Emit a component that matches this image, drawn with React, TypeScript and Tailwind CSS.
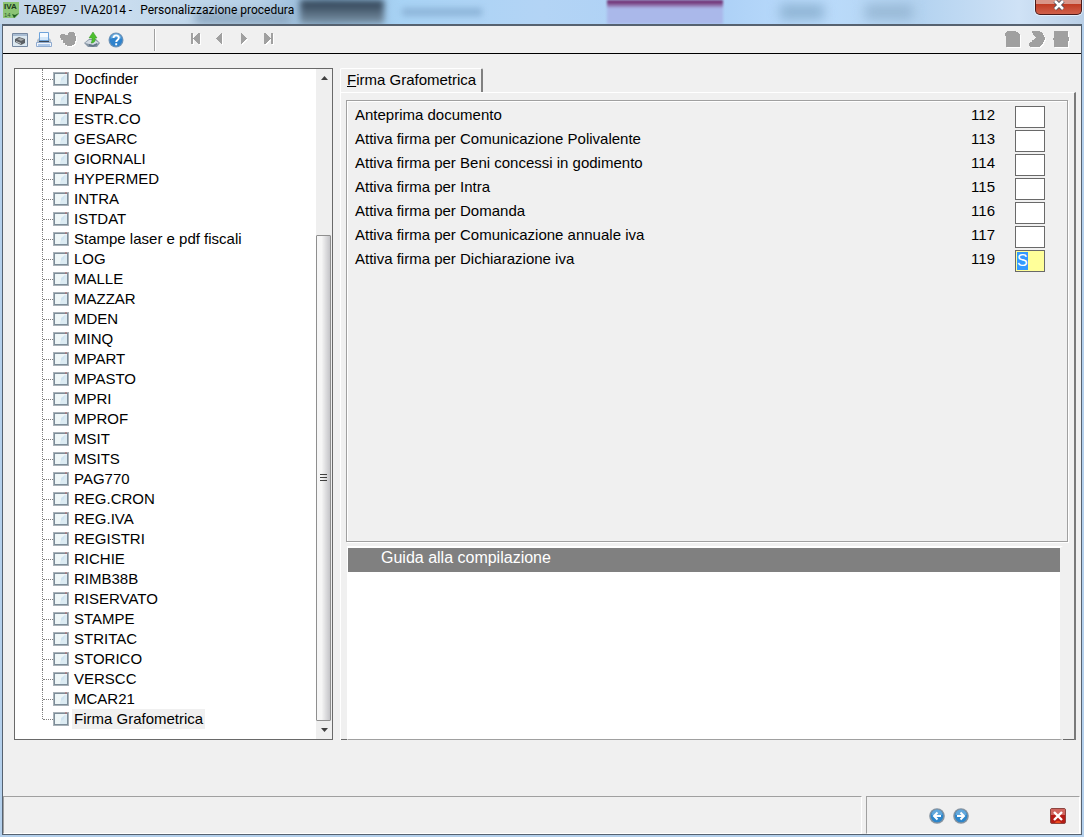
import type { ReactNode } from "react"

const treeItems = [
  "Docfinder",
  "ENPALS",
  "ESTR.CO",
  "GESARC",
  "GIORNALI",
  "HYPERMED",
  "INTRA",
  "ISTDAT",
  "Stampe laser e pdf fiscali",
  "LOG",
  "MALLE",
  "MAZZAR",
  "MDEN",
  "MINQ",
  "MPART",
  "MPASTO",
  "MPRI",
  "MPROF",
  "MSIT",
  "MSITS",
  "PAG770",
  "REG.CRON",
  "REG.IVA",
  "REGISTRI",
  "RICHIE",
  "RIMB38B",
  "RISERVATO",
  "STAMPE",
  "STRITAC",
  "STORICO",
  "VERSCC",
  "MCAR21",
  "Firma Grafometrica",
]

const fields = [
  { code: "112", label: "Anteprima documento" },
  { code: "113", label: "Attiva firma per Comunicazione Polivalente" },
  { code: "114", label: "Attiva firma per Beni concessi in godimento" },
  { code: "115", label: "Attiva firma per Intra" },
  { code: "116", label: "Attiva firma per Domanda" },
  { code: "117", label: "Attiva firma per Comunicazione annuale iva" },
  { code: "119", label: "Attiva firma per Dichiarazione iva", value: "S" },
]

function IconButton({ label, children }: { label: string; children: ReactNode }) {
  return (
    <button type="button" aria-label={label} className="flex size-6 items-center justify-center">
      {children}
    </button>
  )
}

function Glyph({ children }: { children: ReactNode }) {
  return (
    <svg width="16" height="16" viewBox="0 0 16 16" aria-hidden="true">
      {children}
    </svg>
  )
}

// disabled toolbar glyph: flat grey with a white shadow on the lower right
function DisabledShape({ d }: { d: string }) {
  return (
    <svg width="17" height="17" viewBox="0 0 17 17" aria-hidden="true" shapeRendering="crispEdges">
      <path d={d} fill="#fff" transform="translate(1 1)" />
      <path d={d} fill="#a0a0a0" />
    </svg>
  )
}

function NodeIcon() {
  return (
    <svg width="16" height="14" viewBox="0 0 16 14" className="shrink-0" aria-hidden="true">
      <path d="M0 0h16v14H0z" fill="#a9b2b8" />
      <path d="M1 1h14v12H1z" fill="#7d8d99" />
      <path d="M2 2h12v10H2z" fill="#eef6f7" />
      <path d="M7 12c0-4 3-6 5-9h2v9z" fill="#dcebf2" />
      <path d="M8 6l4-3-1 4-3 2z" fill="#cfe3f0" />
      <path d="M12 1h2" stroke="#b9696c" />
    </svg>
  )
}

function TitleBar() {
  return (
    <header className="relative flex h-6 items-start overflow-hidden bg-[linear-gradient(90deg,#c3d5e6_0%,#c8dcee_12%,#b5cfe5_24%,#8fb6d8_30%,#a8d3f5_37%,#b3d4f5_50%,#acd0f6_66%,#bbdcfc_75%,#b4d3f0_85%,#cfe2f6_94%,#b9cfe6_100%)]">
      <div className="absolute top-3 left-[195px] h-3 w-24 bg-[#8ba6bf] blur-[5px]" />
      <div className="absolute top-0 left-[300px] h-6 w-[84px] bg-linear-to-b from-[#2b3d4f] to-[#8098ac] blur-[3px]" />
      <div className="absolute top-2 left-[402px] h-2 w-20 bg-[#8db4d8] blur-[3px]" />
      <div className="absolute top-0 left-[607px] h-6 w-[116px] bg-linear-to-b from-[#733779] from-10% to-[#aab8ea] to-35% blur-[1px]" />
      <div className="absolute top-1 left-[780px] h-4 w-11 bg-[#8fb4d4] blur-[6px]" />
      <div className="absolute top-1 left-[865px] h-4 w-12 bg-[#98b9d6] blur-[6px]" />
      <svg width="16" height="16" viewBox="0 0 16 16" className="relative mt-0.5 ml-[3px]" aria-hidden="true">
        <path d="M0 0h16v12l-4 4H0z" fill="#8cc474" />
        <path d="M16 11l-5 5-2-4 3 1z" fill="#1f5c22" />
        <text x="1" y="7" fontSize="8" fontWeight="700" fontFamily="Liberation Sans, sans-serif" fill="#1c3a1c">
          IVA
        </text>
        <text x="1" y="15" fontSize="6" fontFamily="Liberation Sans, sans-serif" fill="#2f5b2c">
          14
        </text>
      </svg>
      <h1 className="relative ml-[5px] flex gap-2 font-[Roboto,sans-serif] text-xs leading-5 text-black">
        <span>TABE97</span>
        <span>- IVA2014 -</span>
        <span>Personalizzazione procedura</span>
      </h1>
      <button
        type="button"
        aria-label="Chiudi"
        className="relative mr-0.5 ml-auto flex h-[15px] w-[47px] items-start justify-center rounded-b-[5px] border border-t-0 border-[#4b1a1a] bg-linear-to-b from-[#d99588] from-25% via-[#c03a22] via-30% to-[#d0604a] shadow-[0_0_0_1px_#e3eefa]"
      >
        <svg width="14" height="11" viewBox="0 0 14 11" aria-hidden="true">
          <path d="M3 1l8 8M11 1l-8 8" stroke="#50505c" strokeWidth="4.4" />
          <path d="M3 1l8 8M11 1l-8 8" stroke="#fff" strokeWidth="2.6" />
        </svg>
      </button>
    </header>
  )
}

function Toolbar() {
  return (
    <div className="flex h-7 items-center border-b border-black bg-[#f0f0f0] pr-2 pl-[5px]">
      <IconButton label="Anteprima di stampa">
        <Glyph>
          <path d="M.5 1.5h15v13H.5z" fill="#dce8f0" stroke="#7688a0" />
          <path d="M1 2h14v2H1z" fill="#a9bdd3" />
          <path d="M3 7l4-2 6 2v4l-4 2-6-3z" fill="#5c6064" />
          <path d="M5 7l3-1 4 1.5-3 1.5z" fill="#a3a7a9" />
          <path d="M4 9l5 2v1L4 10z" fill="#c5c8ca" />
        </Glyph>
      </IconButton>
      <IconButton label="Stampa">
        <Glyph>
          <path d="M1 8l2-2h10l2 2v4H1z" fill="#b4bfcc" />
          <path d="M3 7h10v3H3z" fill="#3c4856" />
          <path d="M3.5 .5h9v8h-9z" fill="#f4faff" stroke="#6ea3da" />
          <path d="M4 5h8v3H4z" fill="#d3e7f9" />
          <path d="M.5 10.500h15v4H.5z" fill="#f2f4f8" stroke="#8fabd0" />
          <path d="M2 13h12" stroke="#6b9ddb" />
        </Glyph>
      </IconButton>
      <IconButton label="Elimina">
        <DisabledShape d="M1 3h4v1h3V2h1V1h5v1h1v3h1v5h-1v3h-1v1h-2v1H7v-1H5v-2H3V9H1V7H0V4h1z" />
      </IconButton>
      <IconButton label="Esporta">
        <Glyph>
          <path d="M0 11l5-4h7l4 4-3 4H4z" fill="#8796a5" />
          <path d="M1 11l4-3h6l4 3-6 2z" fill="#d3dbe3" />
          <path d="M5 12l4 1 4-2v2l-4 2-4-1z" fill="#657789" />
          <path d="M7 11c1-1 1-3 1-5H5l4-6 4 6h-2c1 3-1 5-4 5z" fill="#4cbf2d" stroke="#37962a" strokeWidth=".5" />
        </Glyph>
      </IconButton>
      <IconButton label="Aiuto">
        <Glyph>
          <circle cx="8" cy="8" r="7.5" fill="#6f94b8" />
          <circle cx="8" cy="8" r="6.3" fill="#2f83cd" />
          <path d="M2.5 7a5.5 5.5 0 0 1 11 0c-4-2-7-2-11 0z" fill="#68acdf" />
          <path d="M5.5 6c0-3.5 5.3-3.3 5.3-.3C10.800 8 8.200 7.800 8.200 10M8.200 11.300v1.900" fill="none" stroke="#fff" strokeWidth="1.900" />
        </Glyph>
      </IconButton>
      <div className="ml-[26px] h-[22px] w-0.5 border-l border-[#a0a0a0] bg-white" />
      <div className="ml-7 flex">
        <IconButton label="Primo">
          <DisabledShape d="M3 2h2v5h1V6h1V5h1V4h1V3h1V2h2v11h-2v-1H9v-1H8v-1H7V9H6V8H5v5H3z" />
        </IconButton>
        <IconButton label="Precedente">
          <DisabledShape d="M10 2v11H9v-1H8v-1H7v-1H6V9H5V8H4V7h1V6h1V5h1V4h1V3h1V2z" />
        </IconButton>
        <IconButton label="Successivo">
          <DisabledShape d="M5 2h1v1h1v1h1v1h1v1h1v1h1v1h-1v1H9v1H8v1H7v1H6v1H5z" />
        </IconButton>
        <IconButton label="Ultimo">
          <DisabledShape d="M13 2h-2v5h-1V6H9V5H8V4H7V3H6V2H4v11h2v-1h1v-1h1v-1h1V9h1V8h1v5h2z" />
        </IconButton>
      </div>
      <div className="ml-auto flex">
        <IconButton label="Nuovo">
          <DisabledShape d="M2 0h9v1h2v1h1v1h1v13H1V5H0V2h1V1h1z" />
        </IconButton>
        <IconButton label="Conferma">
          <DisabledShape d="M3 0h8v1h2v1h1v2h1v2h1v3h-1v2h-1v2h-1v1h-1v1h-1v1H1v-1H0v-3h1v-1h2V9h2V8h1V7h1V6H6V5H5V4H4V2H3z" />
        </IconButton>
        <IconButton label="Salva">
          <DisabledShape d="M1 0h14v6h1v4h-1v6H1V9H0V7h1z" />
        </IconButton>
      </div>
    </div>
  )
}

function TreeScrollbar() {
  return (
    <div className="flex w-4 shrink-0 flex-col bg-[#efefef]" aria-hidden="true">
      <div className="flex h-[17px] items-center justify-center">
        <svg width="7" height="4" viewBox="0 0 7 4">
          <path d="M3.5 0L7 4H0z" fill="#404040" />
        </svg>
      </div>
      <div className="flex-149" />
      <div className="mr-px flex flex-485 flex-col items-center justify-center gap-0.5 rounded-[1px] border border-[#8f8f8f] bg-linear-to-r from-[#f6f6f6] from-35% to-[#c4c4c8]">
        <div className="h-px w-[7px] bg-[#404040]" />
        <div className="h-px w-[7px] bg-[#404040]" />
        <div className="h-px w-[7px] bg-[#404040]" />
      </div>
      <div className="flex h-[18px] items-center justify-center">
        <svg width="7" height="4" viewBox="0 0 7 4">
          <path d="M3.5 4L7 0H0z" fill="#404040" />
        </svg>
      </div>
    </div>
  )
}

function Tree() {
  return (
    <nav className="flex w-[319px] shrink-0 border border-[#696969] bg-white" aria-label="Sezioni">
      <ul className="flex-1 pl-[27px]">
        {treeItems.map((item, i) => {
          const last = i === treeItems.length - 1
          return (
            <li key={item} className="flex h-5 items-center">
              <span className={last ? "h-2.5 self-start border-l border-dotted border-[#808080]" : "h-5 border-l border-dotted border-[#808080]"} />
              <span className="w-2.5 border-t border-dotted border-[#808080]" />
              <NodeIcon />
              <a href="#firma" className={last ? "ml-[3px] bg-[#f0f0f0] px-0.5 leading-5" : "ml-[3px] px-0.5 leading-5"}>
                {item}
              </a>
            </li>
          )
        })}
      </ul>
      <TreeScrollbar />
    </nav>
  )
}

function FormPanel() {
  return (
    <section id="firma" className="flex min-w-0 flex-1 flex-col">
      <div className="flex h-6">
        <button
          type="button"
          className="rounded-t-[2px] border-t border-r-2 border-l border-t-white border-r-[#808080] border-l-white pr-[5px] pb-0.5 pl-1.5 leading-5"
        >
          <span className="underline">F</span>irma Grafometrica
        </button>
      </div>
      <div className="flex flex-1 flex-col border-t border-r-2 border-l border-t-white border-r-[#7a7a7a] border-l-white pt-[7px]">
        <div className="mr-1.5 ml-[5px] flex-1 border border-[#a0a0a0] shadow-[1px_1px_0_#fff,inset_1px_1px_0_#fff]">
          <div className="flex flex-col pt-[5px] pr-[22px] pl-2">
            {fields.map((field) => (
              <div key={field.code} className="flex h-6 items-start">
                <label htmlFor={`campo-${field.code}`} className="flex flex-1 justify-between pr-5 leading-[18px]">
                  <span>{field.label}</span>
                  <span>{field.code}</span>
                </label>
                {field.value ? (
                  <div className="flex h-[22px] w-[30px] border border-[#696969] bg-[#ffff99] p-px">
                    <input
                      id={`campo-${field.code}`}
                      defaultValue={field.value}
                      className="h-[18px] w-[11px] bg-[#3399ff] text-base text-white outline-none"
                    />
                  </div>
                ) : (
                  <input
                    id={`campo-${field.code}`}
                    className="h-[22px] w-[30px] border border-[#696969] bg-white px-px outline-none"
                  />
                )}
              </div>
            ))}
          </div>
        </div>
        <div className="mt-1 flex h-[194px]">
          <div className="w-1.5 border-b border-[#696969]" />
          <div className="flex flex-1 flex-col border-t-2 border-r-[3px] border-b border-l border-t-white border-r-[#f0f0f0] border-b-[#a0a0a0] border-l-white bg-white">
            <h2 className="h-6 bg-[#808080] pl-[33px] text-base leading-5 text-white">Guida alla compilazione</h2>
          </div>
          <div className="w-[11px] border-b border-[#696969]" />
        </div>
      </div>
    </section>
  )
}

function RoundArrow({ d }: { d: string }) {
  return (
    <Glyph>
      <circle cx="8" cy="8" r="7.8" fill="#8593a0" />
      <circle cx="8" cy="8" r="6.3" fill="#2c86cb" />
      <path d="M2.5 7a5.5 5.5 0 0 1 11 0z" fill="#62a8dc" />
      <path d={d} fill="none" stroke="#fff" strokeWidth="2" />
    </Glyph>
  )
}

function StatusBar() {
  return (
    <footer className="flex h-[38px] pr-px">
      <div className="flex-1 border border-t-[#a0a0a0] border-r-white border-b-white border-l-[#a0a0a0]" />
      <div className="ml-1 flex w-[214px] items-center border border-t-[#a0a0a0] border-r-white border-b-white border-l-[#a0a0a0] pt-0.5 pr-[9px] pl-[58px]">
        <IconButton label="Indietro">
          <RoundArrow d="M12 8H5M8.5 4.5L5 8l3.5 3.5" />
        </IconButton>
        <IconButton label="Avanti">
          <RoundArrow d="M4 8h7M7.5 4.5L11 8l-3.500 3.5" />
        </IconButton>
        <div className="flex-1" />
        <IconButton label="Esci">
          <Glyph>
            <rect x=".5" y=".5" width="15" height="15" rx="1.5" fill="#b51c16" stroke="#8d4540" />
            <path d="M1 1h14v6H1z" fill="#d0665f" />
            <path d="M5 15c1-3 5-3 6 0z" fill="#ec4a1c" />
            <path d="M4 4l8 8M12 4l-8 8" stroke="#fff" strokeWidth="2.4" />
          </Glyph>
        </IconButton>
      </div>
    </footer>
  )
}

export default function App() {
  return (
    <div className="flex min-h-screen flex-col bg-[#b4d0ec] font-['Liberation_Sans',Arial,sans-serif] text-[15px] text-black">
      <TitleBar />
      <div className="mr-0.5 mb-0.5 ml-0.5 flex flex-1 flex-col border border-t-2 border-[#566270] bg-[#f0f0f0]">
        <Toolbar />
        <main className="flex flex-1 gap-[7px] pt-3.5 pr-[5px] pb-14 pl-[11px]">
          <Tree />
          <FormPanel />
        </main>
        <StatusBar />
      </div>
    </div>
  )
}
